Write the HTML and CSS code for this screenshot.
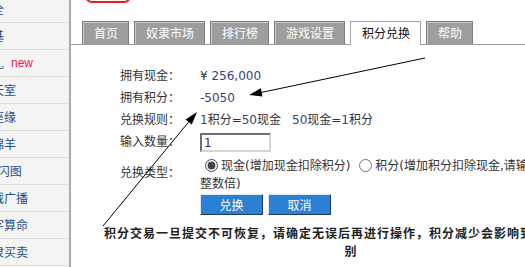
FILE: index.html
```html
<!DOCTYPE html>
<html lang="zh-CN">
<head>
  <meta charset="UTF-8">
  <title>积分兑换</title>
  <link rel="stylesheet" href="styles.css">
</head>
<body>
  <div class="page">
    <ul class="side">
      <li><a href="#">安全</a></li>
      <li><a href="#">地基</a></li>
      <li><a href="#">大礼</a><span class="new">new</span></li>
      <li><a href="#">聊天室</a></li>
      <li><a href="#">星座缘</a></li>
      <li><a href="#">养绵羊</a></li>
      <li><a href="#">QQ闪图</a></li>
      <li><a href="#">下载广播</a></li>
      <li><a href="#">八字算命</a></li>
      <li><a href="#">奴隶买卖</a></li>
    </ul>

    <div class="main">
      <div class="head">
        <div class="red-btn"></div>
        <ul class="tabs">
          <li>首页</li>
          <li>奴隶市场</li>
          <li>排行榜</li>
          <li>游戏设置</li>
          <li class="on">积分兑换</li>
          <li>帮助</li>
        </ul>
      </div>

      <form class="box">
        <table class="form">
          <tr>
            <td class="lbl">拥有现金：</td>
            <td class="val">¥ <span class="num">256,000</span></td>
          </tr>
          <tr>
            <td class="lbl">拥有积分：</td>
            <td class="val"><span class="num">-5050</span></td>
          </tr>
          <tr>
            <td class="lbl">兑换规则：</td>
            <td class="val"><span class="num">1</span>积分=<span class="num">50</span>现金<span class="gap"><span class="num">50</span>现金=<span class="num">1</span>积分</span></td>
          </tr>
          <tr>
            <td class="lbl">输入数量：</td>
            <td class="val"><input type="text" class="qty" value="1"></td>
          </tr>
          <tr>
            <td class="lbl">兑换类型：</td>
            <td class="val radios">
              <label><input type="radio" name="type" checked>现金(增加现金扣除积分)</label>
              <label><input type="radio" name="type">积分(增加积分扣除现金,请输入50的整数倍)</label>
            </td>
          </tr>
          <tr>
            <td></td>
            <td class="btn-cell">
              <div class="btns">
                <button type="submit">兑换</button>
                <button type="button">取消</button>
              </div>
            </td>
          </tr>
        </table>
        <p class="warn">积分交易一旦提交不可恢复，请确定无误后再进行操作，积分减少会影响到您的排行级别</p>
      </form>
    </div>
  </div>

  <!-- flechas dibujadas encima -->
  <svg class="arrows" width="525" height="267" viewBox="0 0 525 267">
    <line x1="425" y1="58" x2="261" y2="92.5" stroke="#000" stroke-width="1"/>
    <polygon points="249,95 262.5,96.4 260.8,88.3" fill="#000"/>
    <line x1="103" y1="226" x2="189" y2="121.5" stroke="#000" stroke-width="1"/>
    <polygon points="197,112 191.8,124.5 185.6,119.5" fill="#000"/>
  </svg>
</body>
</html>
```

FILE: styles.css
```css
html, body {
  margin: 0;
  overflow: hidden;
}

body {
  position: relative;
  width: 525px;
  height: 267px;
  font: 12px "DejaVu Sans", "Noto Sans CJK SC", sans-serif;
  color: #333;
  background-color: #fff;
}

.page {
  display: flex;
  align-items: flex-start;
}

/* menu lateral */
.side {
  flex: none;
  width: 69px;
  min-height: 280px;
  margin: -4px 0 0;
  padding: 0;
  list-style: none;
  background-color: #f4f5f2;
  border-right: 2px solid #a9a9a9;
}

.side li {
  display: flex;
  height: 26px;
  line-height: 26px;
  border-bottom: 1px solid #dcdcdc;
  overflow: hidden;
  white-space: nowrap;
}

.side a {
  margin-left: -20px;
  color: #1f4f8f;
  text-decoration: none;
  font-family: "Noto Sans CJK SC", sans-serif;
}

.new {
  margin-left: 7px;
  color: #f0145a;
  font-family: "Liberation Sans", sans-serif;
}

/* zona principal */
.main {
  flex: none;
  width: 640px;
}

.head {
  height: 44px;
  border-bottom: 1px solid #9a9a9a;
  display: flex;
  flex-direction: column;
  justify-content: space-between;
}

.red-btn {
  width: 42px;
  height: 9px;
  margin: -10px 0 0 14px;
  border: 2px solid #ea1b23;
  border-radius: 0 0 7px 7px;
  background-color: #fff;
}

.tabs {
  display: flex;
  align-items: flex-end;
  gap: 5px;
  margin: 0 0 0 11px;
  padding: 0;
  list-style: none;
}

.tabs li {
  height: 22px;
  line-height: 22px;
  padding: 0 10px 0 11px;
  border: 1px solid #7d7d7d;
  border-bottom: 0;
  background-color: #9e9e9e;
  color: #fff;
  box-shadow: inset 1px 1px 0 #c9c9c9;
  font-family: "Noto Sans CJK SC", sans-serif;
}

.tabs li.on {
  height: 23px;
  margin-bottom: -1px;
  background-color: #fff;
  color: #111;
  border-color: #a3a3a3;
  box-shadow: none;
}

/* formulario */
.box {
  margin: 0;
  padding: 20px 0 0 49px;
}

.form {
  border-collapse: collapse;
}

.form td {
  padding: 0;
  height: 22px;
  line-height: 22px;
  vertical-align: middle;
}

.form .lbl {
  width: 80px;
  white-space: nowrap;
}

.form .val {
  width: 370px;
}

.num {
  color: #34457a;
}

.gap {
  margin-left: 11px;
}

.qty {
  box-sizing: border-box;
  width: 71px;
  height: 19px;
  margin: 0;
  padding: 0 2px;
  border: 2px solid;
  border-color: #6f6f6f #d8d5ce #d8d5ce #6f6f6f;
  font: 12px "DejaVu Sans", sans-serif;
  color: #4b1a7a;
  vertical-align: middle;
}

.form .radios {
  padding-top: 4px;
  line-height: 18px;
}

.radios input {
  width: 13px;
  height: 13px;
  margin: 0 3px 0 5px;
  vertical-align: -2px;
  accent-color: #444;
}

.form .btn-cell {
  height: 21px;
  line-height: 21px;
}

.btns {
  display: flex;
  gap: 5px;
}

.btns button {
  width: 63px;
  height: 21px;
  padding: 0;
  border: 1px solid;
  border-color: #dfe8f2 #1c3c66 #1c3c66 #dfe8f2;
  background-color: #2b80d4;
  color: #fff;
  font: 12px "Noto Sans CJK SC", sans-serif;
  cursor: pointer;
}

.warn {
  width: 496px;
  margin: 9px 0 0 -17px;
  line-height: 18px;
  text-align: center;
  font-weight: bold;
  letter-spacing: 1px;
  color: #222;
  font-family: "Noto Sans CJK SC", sans-serif;
}

.arrows {
  position: absolute;
  left: 0;
  top: 0;
  pointer-events: none;
}
```
